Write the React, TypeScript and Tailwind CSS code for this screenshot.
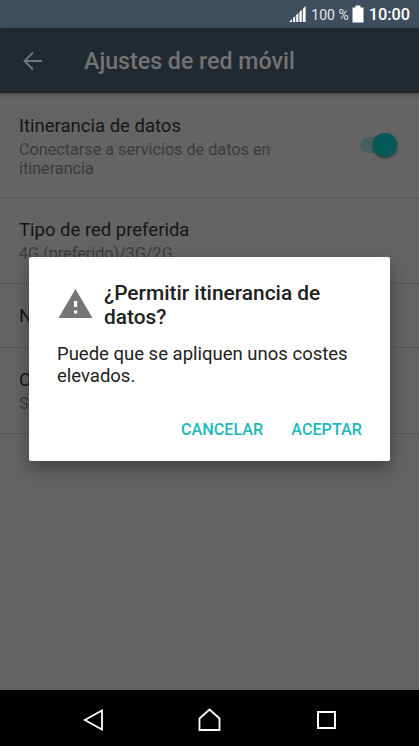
import React from 'react';

interface SettingRowProps {
  title: string;
  summary?: string;
  className?: string;
  children?: React.ReactNode;
}

function SettingRow({ title, summary, className = '', children }: SettingRowProps) {
  return (
    <div className={`flex border-b border-[#575757] pl-[19px] pr-[22px] ${className}`}>
      <div className="flex-1">
        <div className="text-[18.5px] leading-6 whitespace-nowrap text-[#151515]">{title}</div>
        {summary && (
          <div className="mt-0.5 w-[270px] text-[16.2px] leading-[19px] text-[#3b3b3b]">{summary}</div>
        )}
      </div>
      {children}
    </div>
  );
}

function StatusBar() {
  return (
    <div className="h-7 bg-[#3e4e5e] flex items-center justify-end pr-[9px] text-white">
      <svg className="w-[18px] h-[18px]" viewBox="0 0 18 18" fill="currentColor">
        <path d="M1 17L4 14.2V17zM5 13.2L7.2 11V17H5zM8.2 10L10.4 8V17H8.2zM11.4 7L13.8 4.8V17H11.4zM14.8 4L17.6 1V17H14.8z" />
      </svg>
      <span className="ml-[5px] text-[14px] leading-7 pt-0.5 text-[#e4e7ea] whitespace-nowrap">100 %</span>
      <svg className="ml-[3px] w-3 h-[18px]" viewBox="0 0 12 18" fill="currentColor">
        <path d="M3.5 .5h5v2H11.5v15H.5V2.5h3z" />
      </svg>
      <span className="ml-[5px] text-[16.3px] leading-7 pt-0.5 font-medium">10:00</span>
    </div>
  );
}

function NavigationBar() {
  return (
    <div className="h-14 bg-black flex items-center justify-between pl-[82px] pr-[81px] pt-1">
      <svg className="w-6 h-6" viewBox="0 0 24 24" fill="none" stroke="#fff" strokeWidth="1.8">
        <path d="M2.8 12L20 2.5V21.5z" />
      </svg>
      <svg className="w-6 h-6" viewBox="0 0 24 24" fill="none" stroke="#fff" strokeWidth="1.8">
        <path d="M1.5 10.5L11.5 1.5L21.5 10.5V22H1.5z" />
      </svg>
      <svg className="w-6 h-6" viewBox="0 0 24 24" fill="none" stroke="#fff" strokeWidth="2">
        <rect x="4" y="4" width="17" height="16" />
      </svg>
    </div>
  );
}

function RoamingDialog() {
  return (
    <div className="absolute left-[29px] top-[257px] w-[361px] h-[204px] rounded-[2px] bg-white pl-7 pr-7 pt-6 text-[#212121] shadow-[0_8px_18px_rgba(0,0,0,0.35)]">
      <div className="flex">
        <svg className="mt-2 w-9 h-[30px] flex-shrink-0" viewBox="0 0 36 30">
          <path d="M18.5 0L35.5 29H1.5z" fill="#757575" />
          <path d="M17 12h3.2v6H17zM17 21.5h3.2v3H17z" fill="#fff" />
        </svg>
        <h2 className="ml-[11px] w-[240px] text-[20.9px] leading-[24px] font-medium">
          ¿Permitir itinerancia de datos?
        </h2>
      </div>
      <p className="mt-3.5 text-[18.5px] leading-[22px]">
        Puede que se apliquen unos costes elevados.
      </p>
      <div className="mt-[31px] flex justify-end gap-7 text-[16.2px] leading-6 font-medium text-[#21b8bd]">
        <button>CANCELAR</button>
        <button>ACEPTAR</button>
      </div>
    </div>
  );
}

export default function App() {
  return (
    <div className="relative w-[419px] h-[746px] overflow-hidden flex flex-col bg-[#646464] font-['Roboto',sans-serif]">
      <StatusBar />

      {/* App bar */}
      <header className="h-[65px] bg-[#212a31] flex items-center pl-[23px] text-[#747474] shadow-[0_1px_4px_rgba(0,0,0,0.4)]">
        <svg className="w-5 h-5" viewBox="0 0 20 20" fill="none" stroke="currentColor" strokeWidth="2">
          <path d="M19 10H2M10 1.5L1.5 10L10 18.5" />
        </svg>
        <h1 className="ml-[41px] pt-px text-[23.2px] leading-8 font-medium whitespace-nowrap">
          Ajustes de red móvil
        </h1>
      </header>

      {/* Settings list */}
      <main className="flex-1">
        <SettingRow
          title="Itinerancia de datos"
          summary="Conectarse a servicios de datos en itinerancia"
          className="h-[105px] pt-[21px]"
        >
          <div className="mt-[23px] flex h-4 w-[37px] items-center justify-end rounded-full bg-[#446160]">
            <div className="h-6 w-6 flex-shrink-0 rounded-full bg-[#045a58] shadow-[0_1px_3px_rgba(0,0,0,0.5)]" />
          </div>
        </SettingRow>
        <SettingRow
          title="Tipo de red preferida"
          summary="4G (preferido)/3G/2G"
          className="h-[86px] pt-5"
        />
        <SettingRow title="N" className="h-16 pt-5" />
        <SettingRow title="O" summary="S" className="h-[86px] pt-5" />
      </main>

      <NavigationBar />
      <RoamingDialog />
    </div>
  );
}
